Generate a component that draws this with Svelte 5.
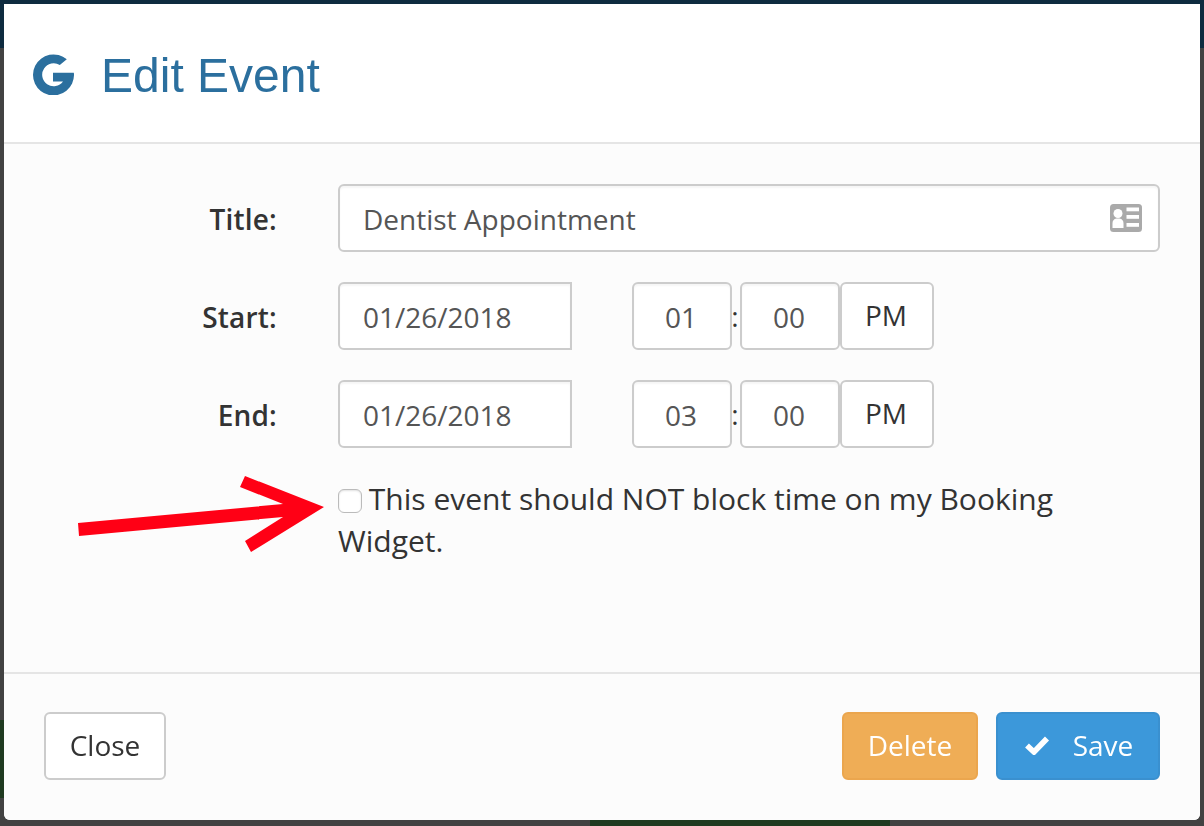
<script>
  let title = $state('Dentist Appointment');
  let notBlocking = $state(false);
  let rows = $state([
    { label: 'Start:', date: '01/26/2018', hour: '01', minute: '00', period: 'PM' },
    { label: 'End:', date: '01/26/2018', hour: '03', minute: '00', period: 'PM' }
  ]);
</script>

<div class="backdrop">
  <div class="nav"></div>
  <div class="green-left"></div>
  <div class="green-bottom"></div>
</div>

<div class="page">
  <div class="modal">
    <header>
      <svg class="logo" viewBox="0 0 41 41" aria-hidden="true">
        <path d="M33.8 5.3 A20.5 20.5 0 1 0 41 20.5 Q41 19.5 40.8 18.7 H20 V27.5 H30 A11.5 11.5 0 1 1 26.8 11 Z" fill="#2b6f9e" />
      </svg>
      <h1>Edit Event</h1>
    </header>

    <section class="body">
      <div class="row">
        <label class="name" for="title">Title:</label>
        <div class="title-field">
          <input id="title" class="field wide" bind:value={title} />
          <svg class="card" viewBox="0 0 32 28" aria-hidden="true">
            <rect width="32" height="28" rx="3.5" fill="#aaa" />
            <circle cx="8" cy="9.5" r="4.5" fill="#fff" />
            <path d="M2.5 24 v-4.5 a5 5 0 0 1 4 -5 h3 a5 5 0 0 1 4 5 v4.5 z" fill="#fff" />
            <rect x="16.5" y="3.5" width="12.5" height="3.8" fill="#fff" />
            <rect x="16.5" y="11" width="12.5" height="3.8" fill="#fff" />
            <rect x="16.5" y="19" width="12.5" height="3.8" fill="#fff" />
          </svg>
        </div>
      </div>

      {#each rows as row}
        <div class="row">
          <span class="name">{row.label}</span>
          <input class="field date" bind:value={row.date} />
          <div class="time">
            <input class="field num" bind:value={row.hour} />
            <span class="colon">:</span>
            <input class="field num" bind:value={row.minute} />
            <button class="period">{row.period}</button>
          </div>
        </div>
      {/each}

      <div class="row check-row">
        <span class="spacer"></span>
        <label class="check">
          <input type="checkbox" bind:checked={notBlocking} />
          This event should NOT block time on my Booking Widget.
        </label>
      </div>

      <svg class="arrow" viewBox="0 0 260 90" aria-hidden="true">
        <polygon points="2,49 207,30 164,13 169,2 248,33 175,78 169,67 207,43 3,62" fill="#ff0015" />
      </svg>
    </section>

    <footer>
      <button class="btn close">Close</button>
      <div class="actions">
        <button class="btn delete">Delete</button>
        <button class="btn save">
          <svg viewBox="0 0 26 20" aria-hidden="true">
            <path d="M3 10.5 L10 17 L23 3.5" fill="none" stroke="#fff" stroke-width="5.6" />
          </svg>
          Save
        </button>
      </div>
    </footer>
  </div>
</div>

<style>
  :global(body) {
    background: #424242;
    font-family: "Open Sans", sans-serif;
  }

  .backdrop {
    position: fixed;
    inset: 0;
  }

  .nav {
    height: 48px;
    background: #0e2b3f;
  }

  .green-left {
    position: absolute;
    left: 0;
    top: 720px;
    width: 4px;
    height: 78px;
    background: #1f3a20;
  }

  .green-bottom {
    position: absolute;
    left: 590px;
    bottom: 0;
    width: 300px;
    height: 6px;
    background: #1f3a20;
  }

  .page {
    position: relative;
    padding: 4px;
    width: 1196px;
  }

  .modal {
    background: #fff;
    border-radius: 0 0 6px 6px;
    height: 816px;
    display: flex;
    flex-direction: column;
  }

  header {
    flex: none;
    height: 138px;
    box-sizing: content-box;
    border-bottom: 2px solid #e5e5e5;
    display: flex;
    align-items: center;
    gap: 27px;
    padding-left: 29px;
  }

  .logo {
    width: 41px;
    height: 41px;
    margin-top: 3px;
  }

  h1 {
    margin: 0;
    font: 400 48px/1 "Liberation Sans", Arial, sans-serif;
    color: #2b6f9e;
    padding-top: 5px;
  }

  .body {
    position: relative;
    flex: none;
    height: 530px;
    box-sizing: border-box;
    background: #fcfcfc;
    padding-top: 40px;
    border-bottom: 2px solid #e5e5e5;
    display: flex;
    flex-direction: column;
    gap: 30px;
  }

  .row {
    display: flex;
    align-items: center;
    gap: 61px;
    padding-right: 40px;
  }

  .name,
  .spacer {
    width: 273px;
    flex: none;
    text-align: right;
    font-size: 28px;
    font-weight: 600;
    letter-spacing: 0.2px;
    color: #333;
    padding-top: 2px;
  }

  .field {
    box-sizing: border-box;
    height: 68px;
    border: 2px solid #ccc;
    border-radius: 6px;
    background: #fff;
    color: #555;
    font: 400 28px "Open Sans", sans-serif;
    padding: 2px 23px 0;
    box-shadow: inset 0 2px 2px rgba(0, 0, 0, 0.04);
    outline: none;
  }

  .title-field {
    position: relative;
    flex: 1;
    display: flex;
  }

  .wide {
    flex: 1;
    min-width: 0;
  }

  .card {
    position: absolute;
    right: 18px;
    top: 20px;
    width: 32px;
    height: 28px;
  }

  .date {
    width: 234px;
    border-radius: 6px 0 0 6px;
  }

  .time {
    display: flex;
    align-items: center;
    margin-left: -1px;
  }

  .num {
    width: 100px;
    text-align: center;
    padding: 2px 2px 0 0;
  }

  .colon {
    width: 8px;
    text-align: center;
    font-size: 28px;
    color: #333;
    line-height: 1;
    margin-left: -1px;
    margin-right: 1px;
  }

  .period {
    box-sizing: border-box;
    width: 94px;
    height: 68px;
    border: 2px solid #ccc;
    border-radius: 6px;
    background: #fff;
    color: #333;
    font: 400 28px "Open Sans", sans-serif;
    padding: 0 2px 2px 0;
  }

  .check-row {
    align-items: flex-start;
  }

  .check {
    flex: 1;
    font-size: 30px;
    line-height: 42px;
    color: #333;
  }

  .check input {
    appearance: none;
    box-sizing: border-box;
    width: 24px;
    height: 24px;
    margin: 0 -1px 0 0;
    border: 1.5px solid #bbb;
    border-radius: 6px;
    background: #fff;
    box-shadow: inset 0 1px 2px rgba(0, 0, 0, 0.12);
    vertical-align: -3px;
  }

  .arrow {
    position: absolute;
    left: 72px;
    top: 330px;
    width: 260px;
    height: 90px;
  }

  footer {
    flex: 1;
    background: #fcfcfc;
    border-radius: 0 0 6px 6px;
    display: flex;
    justify-content: space-between;
    padding: 38px 40px 0;
  }

  .actions {
    display: flex;
    gap: 18px;
  }

  .btn {
    box-sizing: border-box;
    height: 68px;
    border: 2px solid #ccc;
    border-radius: 6px;
    background: #fff;
    color: #333;
    font: 400 28px "Open Sans", sans-serif;
    width: 122px;
    padding: 0 0 2px;
  }

  .delete {
    width: 136px;
    background: #efad56;
    border-color: #eba64e;
    color: #fff;
    padding: 0 0 2px;
  }

  .save {
    width: 164px;
    background: #3c98da;
    border-color: #3a90cf;
    color: #fff;
    display: flex;
    align-items: center;
    justify-content: center;
    gap: 23px;
    padding-left: 1px;
  }

  .save svg {
    width: 26px;
    height: 20px;
  }
</style>
